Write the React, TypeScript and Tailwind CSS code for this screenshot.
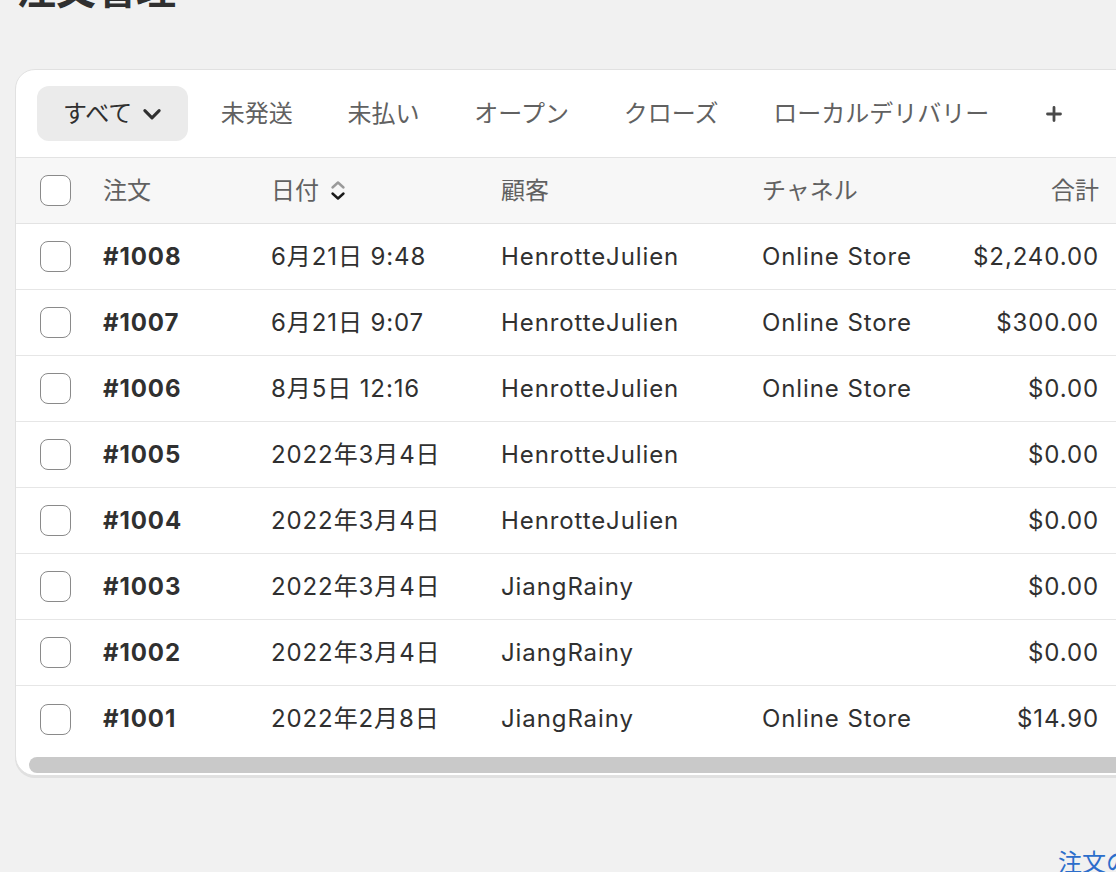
import { Fragment } from "react";

const FONT = { fontFamily: 'Inter, "Noto Sans CJK JP", sans-serif' };

const TABS = ["未発送", "未払い", "オープン", "クローズ", "ローカルデリバリー"];

const ORDERS = [
  { id: "#1008", date: "6月21日 9:48", customer: "HenrotteJulien", channel: "Online Store", total: "$2,240.00" },
  { id: "#1007", date: "6月21日 9:07", customer: "HenrotteJulien", channel: "Online Store", total: "$300.00" },
  { id: "#1006", date: "8月5日 12:16", customer: "HenrotteJulien", channel: "Online Store", total: "$0.00" },
  { id: "#1005", date: "2022年3月4日", customer: "HenrotteJulien", channel: "", total: "$0.00" },
  { id: "#1004", date: "2022年3月4日", customer: "HenrotteJulien", channel: "", total: "$0.00" },
  { id: "#1003", date: "2022年3月4日", customer: "JiangRainy", channel: "", total: "$0.00" },
  { id: "#1002", date: "2022年3月4日", customer: "JiangRainy", channel: "", total: "$0.00" },
  { id: "#1001", date: "2022年2月8日", customer: "JiangRainy", channel: "Online Store", total: "$14.90" },
];

function Checkbox() {
  return <div className="w-[31px] h-[31px] rounded-[8px] border-[1.5px] border-[#8a8a8a] bg-white shrink-0" />;
}

function Chevron({ className }: { className?: string }) {
  return (
    <svg viewBox="0 0 20 20" className={className} fill="none" stroke="currentColor" strokeWidth={2.8} strokeLinecap="round" strokeLinejoin="round">
      <path d="M3.5 7l6.5 6.5L16.5 7" />
    </svg>
  );
}

function SortIcon() {
  return (
    <svg viewBox="0 0 18 24" className="w-[18px] h-[24px]" fill="none" strokeWidth={2.4} strokeLinecap="round" strokeLinejoin="round">
      <path d="M3.5 8.5L9 3.5l5.5 5" stroke="#9a9a9a" />
      <path d="M3.5 14.5L9 19.5l5.5-5" stroke="#1a1a1a" />
    </svg>
  );
}

export default function App() {
  return (
    <div className="w-[1116px] h-[872px] overflow-hidden bg-[#f1f1f1] flex flex-col text-[#303030]" style={FONT}>
      <h1 className="pl-4 -mt-[30px] text-[40px] leading-[40px] font-bold text-[#303030] whitespace-nowrap">注文管理</h1>

      <div className="ml-[15px] mt-[59px] w-[1140px] shrink-0 rounded-[20px] border border-[#e1e1e1] bg-white shadow-[0_2px_0_rgba(0,0,0,0.07)] overflow-hidden">
        {/* Tabs */}
        <div className="h-[87px] flex items-center pl-[21px] text-[24px] text-[#616161] whitespace-nowrap">
          <button className="h-[55px] rounded-[12px] bg-[#ebebeb] pl-[26px] pr-[25px] flex items-center gap-[9px] text-[#303030]">
            すべて
            <Chevron className="w-[22px] h-[22px] text-[#303030]" />
          </button>
          <div className="flex items-center pl-[5px]">
            {TABS.map((t) => (
              <span key={t} className="px-[27.4px]">{t}</span>
            ))}
            <span className="px-[29px] flex items-center">
              <svg viewBox="0 0 16 16" className="w-4 h-4" fill="none" stroke="#4a4a4a" strokeWidth={2.8} strokeLinecap="round">
                <path d="M8 1.5v13M1.5 8h13" />
              </svg>
            </span>
          </div>
        </div>

        {/* Table */}
        <div className="text-[24px] whitespace-nowrap">
          <div className="h-[67px] flex items-center pl-[24px] bg-[#f7f7f7] border-y border-[#e3e3e3] text-[#616161]">
            <div className="w-[63px]"><Checkbox /></div>
            <div className="w-[168px]">注文</div>
            <div className="w-[230px] flex items-center gap-[10px]">日付 <SortIcon /></div>
            <div className="w-[261px]">顧客</div>
            <div className="w-[150px]">チャネル</div>
            <div className="w-[187px] text-right">合計</div>
          </div>

          {ORDERS.map((o, i) => (
            <Fragment key={o.id}>
              <div className={`h-[66px] flex items-center pl-[24px] tracking-[0.9px] ${i < ORDERS.length - 1 ? "border-b border-[#e6e6e6]" : ""}`}>
                <div className="w-[63px]"><Checkbox /></div>
                <div className="w-[168px] font-bold">{o.id}</div>
                <div className="w-[230px]">{o.date}</div>
                <div className="w-[261px]">{o.customer}</div>
                <div className="w-[150px]">{o.channel}</div>
                <div className="w-[187px] text-right">{o.total}</div>
              </div>
            </Fragment>
          ))}
        </div>

        {/* Scrollbar */}
        <div className="pl-[13px] pt-[5px] pb-[2px]">
          <div className="h-4 rounded-full bg-[#c9c9c9]" />
        </div>
      </div>

      <div className="mt-[71px] pl-[1058px] text-[24px] leading-8 text-[#2c6ecb] whitespace-nowrap">注文の詳細を確認する</div>
    </div>
  );
}
